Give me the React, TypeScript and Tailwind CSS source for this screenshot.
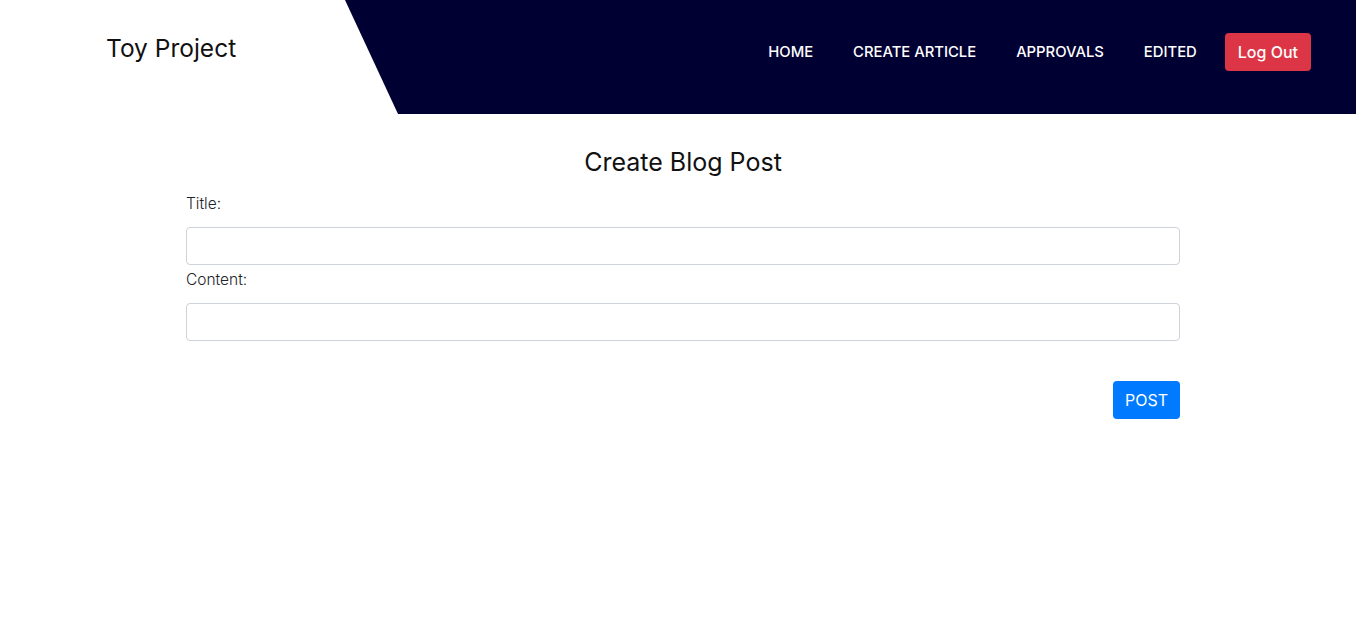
export default function App() {
  const links = ['HOME', 'CREATE ARTICLE', 'APPROVALS', 'EDITED'];

  return (
    <div className="min-h-[633px] bg-white text-[#212529] font-['Inter','Liberation_Sans',sans-serif]">
      <header className="relative h-[114px]">
        <div className="absolute inset-0 bg-[#000033] [clip-path:polygon(345px_0,100%_0,100%_100%,398px_100%)]" />
        <div className="relative flex h-full items-start">
          <div className="pl-[106px] pt-[33px] text-[24.5px] leading-[31px] text-[#111]">Toy Project</div>
          <nav className="ml-auto mr-[45px] mt-[33px] flex items-center">
            {links.map((l) => (
              <a key={l} href="#" className="px-5 text-[14.8px] leading-[38px] font-medium text-white">
                {l}
              </a>
            ))}
            <button type="button" className="ml-2 h-[38px] rounded-[4px] bg-[#dc3545] px-[13px] text-[16px] font-medium text-white">
              Log Out
            </button>
          </nav>
        </div>
      </header>

      <main className="ml-[186px] w-[994px] pt-[30px]">
        <h2 className="text-center text-[25px] leading-[36px] text-[#111]">Create Blog Post</h2>
        <form className="mt-3">
          <label className="block text-[15.5px] font-light leading-[24px] mb-[11px]">Title:</label>
          <input type="text" className="block h-[38px] w-full rounded-[4px] border border-[#ced4da] px-3" />
          <label className="mt-[3px] block text-[15.5px] font-light leading-[24px] mb-[11px]">Content:</label>
          <input type="text" className="block h-[38px] w-full rounded-[4px] border border-[#ced4da] px-3" />
          <div className="mt-10 flex justify-end">
            <button type="button" className="h-[38px] rounded-[4px] bg-[#007bff] px-3 text-[16px] text-white">
              POST
            </button>
          </div>
        </form>
      </main>
    </div>
  );
}
